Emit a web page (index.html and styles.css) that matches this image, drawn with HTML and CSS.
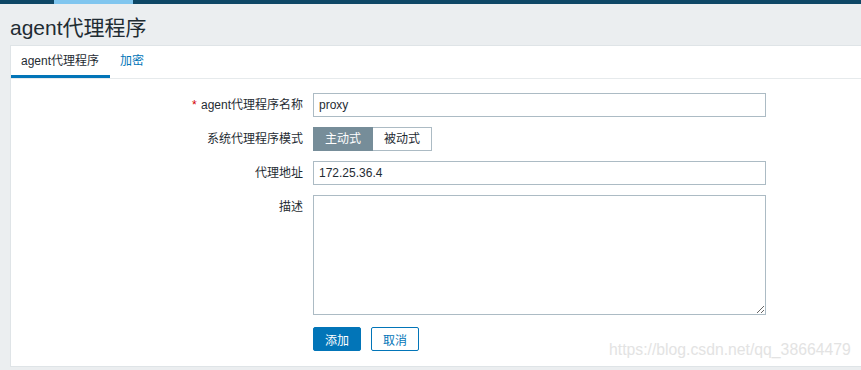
FILE: index.html
```html
<!DOCTYPE html>
<html lang="zh-CN">

<head>
    <meta charset="UTF-8">
    <meta name="viewport" content="width=device-width, initial-scale=1.0">
    <title>agent代理程序</title>
    <link rel="stylesheet" href="styles.css">
</head>

<body>
    <div class="top-nav">
        <div class="top-nav-active"></div>
    </div>
    <div class="header-title">
        <h1>agent代理程序</h1>
    </div>
    <div class="table-forms-container">
        <ul class="tabs-nav">
            <li class="tab tab-active">agent代理程序</li>
            <li class="tab"><a href="#">加密</a></li>
        </ul>
        <form class="form-list">
            <label class="form-label"><span class="asterisk">*</span> agent代理程序名称</label>
            <div class="form-field">
                <input class="text-box" type="text" value="proxy">
            </div>

            <label class="form-label">系统代理程序模式</label>
            <div class="form-field">
                <ul class="radio-segmented">
                    <li class="seg seg-on">主动式</li>
                    <li class="seg">被动式</li>
                </ul>
            </div>

            <label class="form-label">代理地址</label>
            <div class="form-field">
                <input class="text-box" type="text" value="172.25.36.4">
            </div>

            <label class="form-label">描述</label>
            <div class="form-field">
                <textarea class="text-area"></textarea>
            </div>

            <div></div>
            <div class="form-field form-buttons">
                <button type="button" class="btn btn-main">添加</button>
                <button type="button" class="btn btn-alt">取消</button>
            </div>
        </form>
        <div class="watermark">https://blog.csdn.net/qq_38664479</div>
    </div>
</body>

</html>
```

FILE: styles.css
```css
* {
    box-sizing: border-box;
    padding: 0;
    margin: 0;
}

body {
    background-color: #ebeef0;
    font-family: "Liberation Sans", Arial, "Noto Sans CJK SC", sans-serif;
    font-size: 12px;
    color: #1f2c33;
}

.top-nav {
    height: 4px;
    background-color: #0e4766;
}

.top-nav-active {
    margin-left: 54px;
    width: 79px;
    height: 4px;
    background-color: #80c6ef;
}

.header-title {
    height: 41px;
    padding: 12px 10px 0;
}

.header-title h1 {
    font-size: 21px;
    font-weight: 400;
    line-height: 24px;
    color: #1f2c33;
}

.table-forms-container {
    position: relative;
    margin-left: 10px;
    background-color: #fff;
    border: 1px solid #dfe4e7;
    border-right: 0;
    height: 322px;
}

.tabs-nav {
    list-style: none;
    display: flex;
    border-bottom: 1px solid #e6eaec;
}

.tab {
    padding: 8px 10px 7px;
    line-height: 14px;
    border-bottom: 3px solid transparent;
}

.tab-active {
    padding-right: 11px;
    border-bottom-color: #0275b8;
}

.tab a {
    color: #0275b8;
    text-decoration: none;
}

.form-list {
    display: grid;
    grid-template-columns: 292px 453px;
    column-gap: 10px;
    row-gap: 10px;
    padding-top: 14px;
}

.form-label {
    text-align: right;
    line-height: 24px;
}

.asterisk {
    color: #d40000;
    margin-right: 1px;
}

.text-box {
    display: block;
    width: 453px;
    height: 24px;
    padding: 0 5px;
    border: 1px solid #acbbc4;
    font-family: inherit;
    font-size: 12px;
    color: #1f2c33;
    background: #fff;
}

.text-area {
    display: block;
    width: 453px;
    height: 120px;
    padding: 4px 5px;
    border: 1px solid #acbbc4;
    font-family: inherit;
    font-size: 12px;
}

.radio-segmented {
    list-style: none;
    display: flex;
}

.seg {
    height: 24px;
    line-height: 22px;
    text-align: center;
    border: 1px solid #acbbc4;
    border-left: 0;
    width: 59px;
}

.seg-on {
    width: 60px;
    background-color: #768d99;
    border: 1px solid #768d99;
    color: #fff;
}

.form-buttons {
    display: flex;
    gap: 10px;
    margin-top: 2px;
}

.btn {
    width: 48px;
    height: 24px;
    font-family: inherit;
    font-size: 12px;
    border-radius: 2px;
    border: 1px solid #0275b8;
}

.btn-main {
    background-color: #0275b8;
    color: #fff;
}

.btn-alt {
    background-color: #fff;
    color: #0275b8;
}

.watermark {
    position: absolute;
    left: 598px;
    top: 295px;
    font-size: 15.75px;
    line-height: 18px;
    color: #e3e3e3;
    white-space: nowrap;
}
```
